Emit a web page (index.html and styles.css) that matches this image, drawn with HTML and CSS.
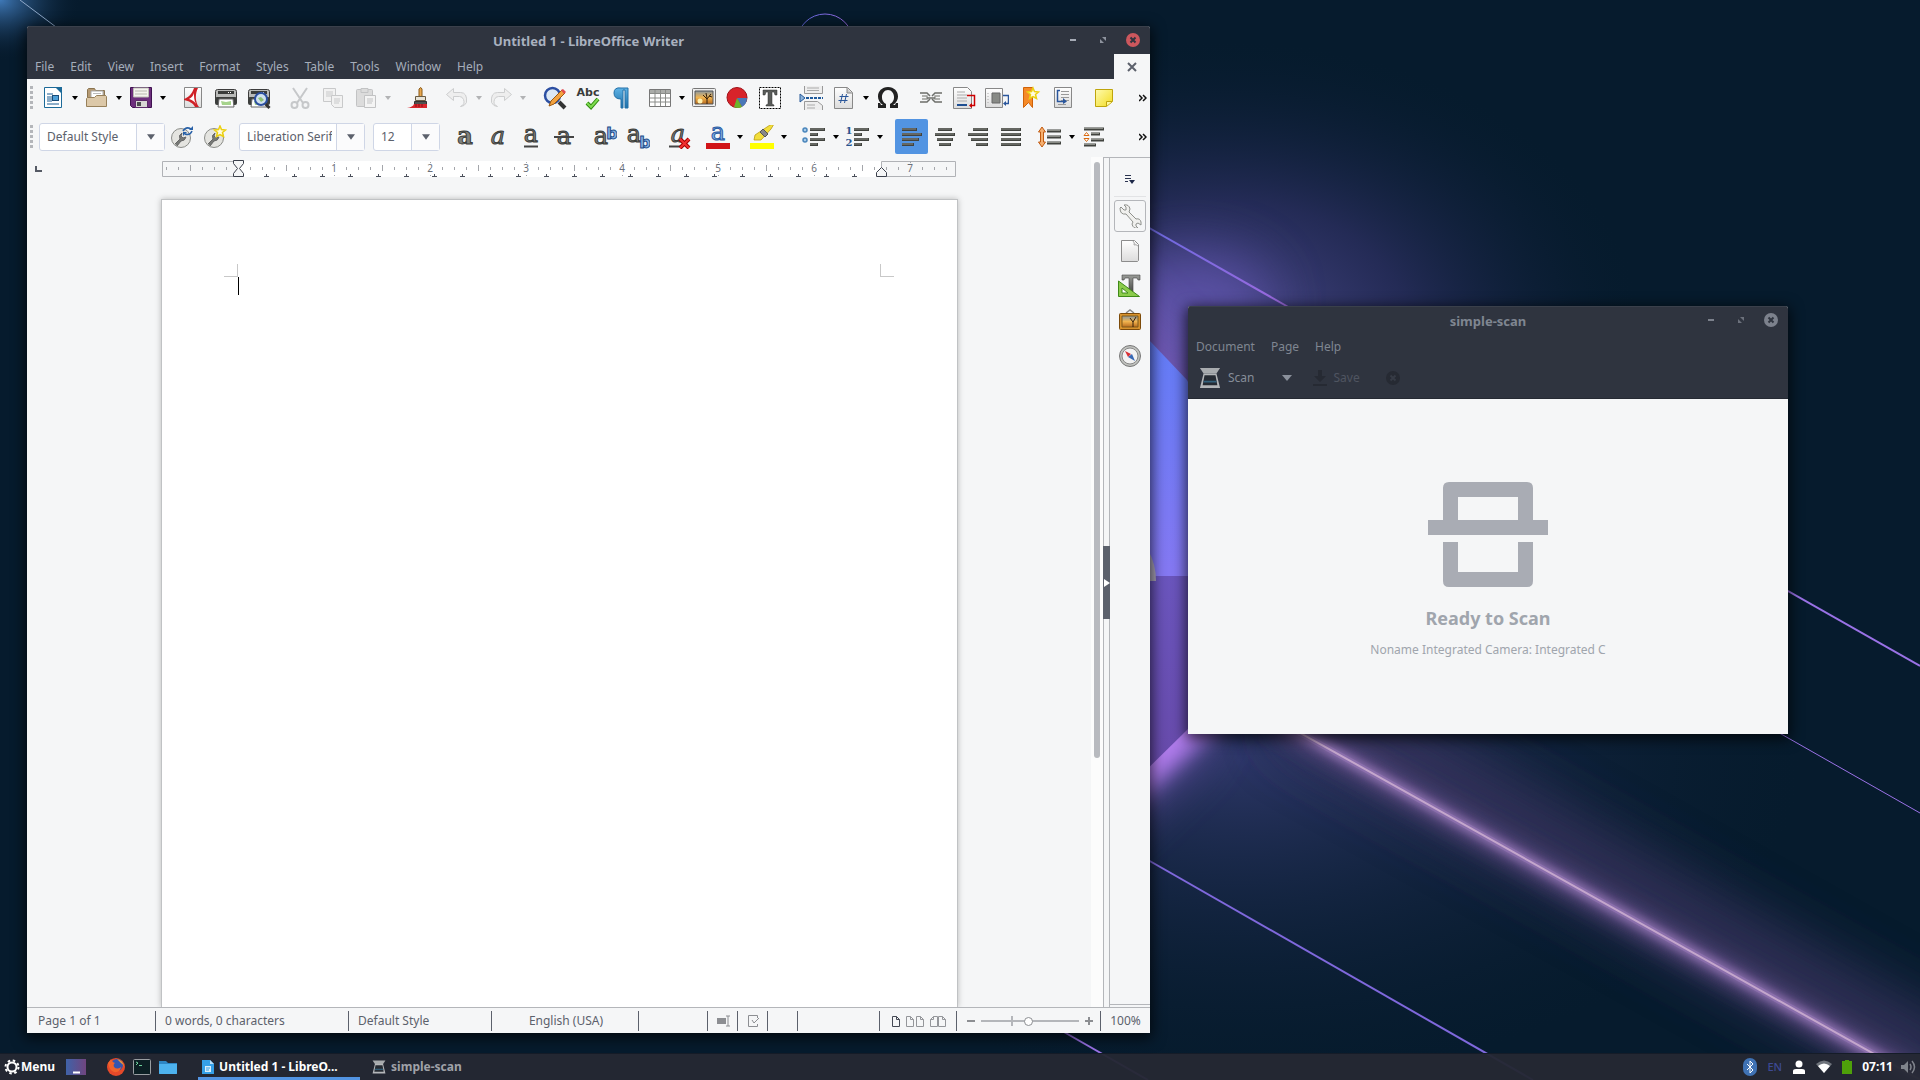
FILE: index.html
```html
<!DOCTYPE html>
<html lang="en">
<head>
<meta charset="utf-8">
<title>Desktop</title>
<link rel="stylesheet" href="styles.css">
</head>
<body>
<svg class="defs" aria-hidden="true">
  <defs>
    <linearGradient id="gDark" x1="0" y1="0" x2="0" y2="1"><stop offset="0" stop-color="#9a9c98"/><stop offset="1" stop-color="#4a4c49"/></linearGradient>
    <linearGradient id="gBlue" x1="0" y1="0" x2="0" y2="1"><stop offset="0" stop-color="#5fb3e6"/><stop offset="1" stop-color="#1b6ea8"/></linearGradient>
    <linearGradient id="gPaper" x1="0" y1="0" x2="0" y2="1"><stop offset="0" stop-color="#fff"/><stop offset="1" stop-color="#dcdcdc"/></linearGradient>
    <linearGradient id="gSky" x1="0" y1="0" x2="0" y2="1"><stop offset="0" stop-color="#8b98a0"/><stop offset=".5" stop-color="#f0b450"/><stop offset="1" stop-color="#b86a1c"/></linearGradient>
    <linearGradient id="gYel" x1="0" y1="0" x2="1" y2="1"><stop offset="0" stop-color="#fffbb0"/><stop offset="1" stop-color="#f2dc20"/></linearGradient>
  </defs>
  <symbol id="new" viewBox="0 0 24 24"><path d="M3.500 1.500h13l4 5v15h-17z" fill="#fff" stroke="#1c6a99"/><path d="M14 1h7v7z" fill="#1c6a99"/><path d="M6 8h6M6 11h5M6 13h5M6 15h5M6 18h12" stroke="#1a5c92" /><rect x="11.500" y="9.500" width="6" height="5" fill="#4ea0d8" stroke="#1a4c78"/></symbol>
  <symbol id="open" viewBox="0 0 24 24"><path d="M2.500 20V3.500l1-1h6l1 2h9v5H21" fill="#b59a74" stroke="#8a7450"/><path d="M6 5h12v8H6z" fill="#fff" stroke="#aaa"/><path d="M8 7.500h8" stroke="#bbb"/><path d="M1.500 20.500v-8l1-1h7l2-2h9l1 1v10z" fill="#dcc8a8" stroke="#97805a"/></symbol>
  <symbol id="save" viewBox="0 0 24 24"><path d="M1.500 1.500h21v20h-19l-2-2z" fill="#6d2f7d" stroke="#3f1250"/><path d="M4.500 2h15v9h-15z" fill="#f4f4ee" stroke="#bcbcb4"/><path d="M6 5h12M6 8h12" stroke="#b8b8b0"/><path d="M6.500 14.500h12v7h-12z" fill="#d8d8d4" stroke="#5c2a6a"/><path d="M8 16h4v4H8z" fill="#4c4c50"/></symbol>
  <symbol id="pdf" viewBox="0 0 24 24"><path d="M3.500 1.500h17v20h-17z" fill="url(#gPaper)" stroke="#888"/><path d="M3 13c5-2 8-5 10-11h4c-3 6-3 14 1 19h-4c-2-4-6-6-11-7" fill="#cf2026"/><path d="M8 13c3-2 4-3 5-6 0 4 0 7 2 11-2-3-4-4-7-5" fill="#fff"/></symbol>
  <symbol id="print" viewBox="0 0 24 24"><rect x="1.500" y="3.500" width="21" height="11" rx="2" fill="#b9bab8" stroke="#3c3c3c"/><path d="M4 5h16v3H4z" fill="#3a3c3a"/><path d="M14 6.500h4" stroke="#fff" stroke-dasharray="1 1"/><rect x="1" y="11" width="22" height="8" rx="2" fill="#3c3e3c"/><path d="M5 13h14l1 8H4z" fill="#fff" stroke="#666"/><path d="M7 15l5 1 5-1v4H8z" fill="#a6d38c"/></symbol>
  <symbol id="preview" viewBox="0 0 24 24"><use href="#print"/><circle cx="14" cy="13" r="6" fill="#cfe0ee" stroke="#2b4fa0" stroke-width="2"/><path d="M11 12l3-1 3 3-3 2z" fill="#8dbf72"/><path d="M18.500 18l4 4" stroke="#333" stroke-width="3"/></symbol>
  <symbol id="cut" viewBox="0 0 24 24"><g fill="none" stroke="#c6c8ca" stroke-width="2"><path d="M5 2l10 15M19 2L9 17"/><circle cx="6.500" cy="19" r="3"/><circle cx="17.500" cy="19" r="3"/></g></symbol>
  <symbol id="copy" viewBox="0 0 24 24"><g fill="#f2f2f2" stroke="#c8c9ca"><path d="M2.500 2.500h12v13h-12z"/><path d="M5 6h7M5 8h7M5 10h7"/><path d="M10.500 9.500h11v12h-8l-3-3z"/><path d="M13 13h6M13 15h6M13 17h5"/></g></symbol>
  <symbol id="paste" viewBox="0 0 24 24"><g fill="#dcdcdc" stroke="#c2c3c4"><rect x="2.500" y="3.500" width="16" height="17" rx="1"/><path d="M7 2.500h7v4H7z"/><path d="M10.500 9.500h11v12h-11z" fill="#f4f4f4"/><path d="M13 13h6M13 15h6M13 17h5"/></g></symbol>
  <symbol id="brush" viewBox="0 0 24 24"><path d="M13 11V3q2-3 3 0v8" fill="#e8a850" stroke="#8a5a18"/><path d="M9.500 10.500h10v4h-10z" fill="#e8e4d8" stroke="#6a5c44"/><path d="M8.500 15.500h12v3h-12z" fill="#505250" stroke="#333"/><path d="M8 18h13v4H1q6-1 7-4" fill="#d8262c"/><path d="M10 18v3M13 18v3M16 18v3" stroke="#8c1015"/></symbol>
  <symbol id="undo" viewBox="0 0 24 24"><path d="M1.500 8.500l7-6v4h7q7 0 6 10-2 4-6 4 5-2 3-7-1-3-4-3h-6v4z" fill="#eee" stroke="#cdcecf"/></symbol>
  <symbol id="redo" viewBox="0 0 24 24"><path d="M22.500 8.500l-7-6v4h-7q-7 0-6 10 2 4 6 4-5-2-3-7 1-3 4-3h6v4z" fill="#eee" stroke="#cdcecf"/></symbol>
  <symbol id="find" viewBox="0 0 24 24"><path d="M16 16l6 6" stroke="#333" stroke-width="4"/><circle cx="9.500" cy="9.500" r="7.500" fill="#dce8f4" stroke="#2c4fa2" stroke-width="2.500"/><path d="M6 20l2-5L19 4l3 3-11 11z" fill="#f2a240" stroke="#9c5a10"/><path d="M18 4l2-1 3 3-2 2z" fill="#e04a50"/></symbol>
  <symbol id="pil" viewBox="0 0 24 24"><path d="M12 13q-7 0-7-6t7-5h7v20h-3V4h-2v18h-2z" fill="url(#gBlue)" stroke="#2471a8"/></symbol>
  <symbol id="table" viewBox="0 0 24 24"><path d="M1.500 3.500h21v17h-21z" fill="#fff" stroke="#777"/><path d="M2 4h20v3H2z" fill="#aaaca9"/><path d="M2 7.500h20M2 12h20M2 16h20M7 4v16M12.500 4v16M17.500 4v16" stroke="#8a8c89"/></symbol>
  <symbol id="image" viewBox="0 0 24 24"><rect x=".5" y="2.500" width="23" height="18" rx="1" fill="#eee" stroke="#777"/><path d="M3 5h18v13H3z" fill="url(#gSky)" stroke="#555"/><circle cx="8" cy="15" r="2.500" fill="#fff2b0"/><path d="M15 18v-5l-4-4M15 13l4-5M15 12l-1-5M17 10l3 1" stroke="#35200c" fill="none"/></symbol>
  <symbol id="chart" viewBox="0 0 24 24"><circle cx="12" cy="11.500" r="10" fill="#d8232a" stroke="#a01218"/><path d="M12 12h10q0 6-5 9z" fill="#4a78b8"/><path d="M12 12l5 9q-4 2-8 0z" fill="#6cb52c"/></symbol>
  <symbol id="tbox" viewBox="0 0 24 24"><rect x="1.500" y="1.500" width="21" height="21" fill="#fff" stroke="#000" stroke-dasharray="2 1"/><path d="M5 4h14v5h-2l-1-3h-2v12l2 1v1H8v-1l2-1V6H8L7 9H5z" fill="#5a5c59" stroke="#333" stroke-width=".5"/></symbol>
  <symbol id="pbreak" viewBox="0 0 24 24"><path d="M5.500 0v7.500h18V0" fill="#eee" stroke="#999"/><path d="M8 2h12M8 4.500h12" stroke="#aaa"/><path d="M5.500 24v-8.500h13l5 4V24" fill="#eee" stroke="#999"/><path d="M8 19h8M8 22h8" stroke="#aaa"/><path d="M1 8l5 4-5 4z" fill="#8cb4dc" stroke="#2a5c9a"/><path d="M7 12h17" stroke="#1f5a9c" stroke-width="2" stroke-dasharray="3 1"/></symbol>
  <symbol id="field" viewBox="0 0 24 24"><path d="M2.500 1.500h13l5 5v16h-18z" fill="url(#gPaper)" stroke="#888"/><path d="M15 2v5h5" fill="#ccc" stroke="#888"/><path d="M10.500 8l-2 9M14.500 8l-2 9M7.500 10.500h9M6.500 14.500h9" stroke="#2b579a"/></symbol>
  <symbol id="omega" viewBox="0 0 24 24"><path d="M2 22h8v-4C3 14 6 4 12 4s9 10 2 14v4h8v-5h-2l-1 2h-2C26 13 22 1 12 1S-2 13 7 19H5l-1-2H2z" fill="#222"/></symbol>
  <symbol id="link" viewBox="0 0 24 24"><g fill="none" stroke="#6c6e6a" stroke-width="1.500"><path d="M1 7h7l3 3M1 16h7l3-3M23 7h-7l-3 3M23 16h-7l-3-3"/><path d="M3 10h5v3H3M21 10h-5v3h5" stroke="#999b97"/><path d="M8 12h8"/></g></symbol>
  <symbol id="foot" viewBox="0 0 24 24"><path d="M1.500 1.500h14l4 4v17h-18z" fill="url(#gPaper)" stroke="#888"/><path d="M5 6h8M5 9h10M5 12h10M5 15h10" stroke="#aaa"/><path d="M5 19h10" stroke="#1f4f92" stroke-width="2"/><path d="M15 9.500h7.500v10H18" fill="none" stroke="#c00" stroke-width="1.500"/><path d="M20 17v5l-3-2.500z" fill="#c00"/></symbol>
  <symbol id="endn" viewBox="0 0 24 24"><path d="M.5 2.500h17v19H.5z" fill="url(#gPaper)" stroke="#888"/><path d="M7 7h8v10H7z" fill="#888a86" stroke="#666"/><path d="M3 7v12" stroke="#aaa" stroke-dasharray="1 2"/><path d="M18 9.500h5.500v8H20" fill="none" stroke="#2a569c" stroke-width="1.500"/><path d="M21 15v5l-3-2.500z" fill="#2a569c"/></symbol>
  <symbol id="bmark" viewBox="0 0 24 24"><path d="M5.500 1.500h9v20l-4-5-5 5z" fill="#f58a28" stroke="#d06208"/><path d="M15 2l1.500 3.500 4 .5-3 2.500 1 4-3.500-2-3.500 2 1-4-3-2.500 4-.5z" fill="#fffbe0" stroke="#ecd010" stroke-width="1.500"/></symbol>
  <symbol id="xref" viewBox="0 0 24 24"><path d="M3.500 1.500h17v20h-17z" fill="url(#gPaper)" stroke="#888"/><path d="M10 5.500h8M10 8.500h8M10 11.500h8M10 14.500h8M7 18.500h8" stroke="#999"/><path d="M9 4.500H6.500v11H12" fill="none" stroke="#2a569c" stroke-width="1.500"/><path d="M12 12v6l4-2.500z" fill="#2a569c"/></symbol>
  <symbol id="note" viewBox="0 0 24 24"><path d="M3.500 3.500h17v12l-6 5h-11z" fill="url(#gYel)" stroke="#bfa50c"/><path d="M20 15.500h-5.500V20" fill="#fff9a0" stroke="#bfa50c"/></symbol>
  <symbol id="wrenchc" viewBox="0 0 24 24"><circle cx="11" cy="13" r="9.500" fill="#e4e4e0" stroke="#8a8c88"/><path d="M5 19l5-5q-2-4 2-6l-1 3 2 2 3-1q-1 4-5 4l-4 5" fill="#777976" stroke="#666"/></symbol>
  <symbol id="updst" viewBox="0 0 24 24"><use href="#wrenchc"/><path d="M13 6q3-5 8-2M22 6q-2 5-7 3" fill="none" stroke="#2a62a8" stroke-width="1.500"/><path d="M23 1v4h-4zM13 11V7h4z" fill="#2a62a8"/></symbol>
  <symbol id="newst" viewBox="0 0 24 24"><use href="#wrenchc"/><path d="M17 1l1.500 3.500 4 .5-3 2.500 1 4-3.500-2-3.500 2 1-4-3-2.500 4-.5z" fill="#fffbe0" stroke="#ecd010" stroke-width="1.500"/></symbol>
  <symbol id="bars" viewBox="0 0 24 24"><path d="M2 4.500h15M2 9.500h20M2 14.500h17M2 19.500h12" stroke="#41433f" stroke-width="3"/><path d="M2 4h14M2 9h19M2 14h16M2 19h11" stroke="#8a8c86"/></symbol>
  <symbol id="alc" viewBox="0 0 24 24"><path d="M5 4.500h14M2 9.500h20M4 14.500h16M6 19.500h12" stroke="#41433f" stroke-width="3"/><path d="M5 4h13M2 9h19M4 14h15M6 19h11" stroke="#8a8c86"/></symbol>
  <symbol id="alr" viewBox="0 0 24 24"><path d="M7 4.500h15M2 9.500h20M5 14.500h17M10 19.500h12" stroke="#41433f" stroke-width="3"/><path d="M7 4h14M2 9h19M5 14h16M10 19h11" stroke="#8a8c86"/></symbol>
  <symbol id="alj" viewBox="0 0 24 24"><path d="M2 4.500h20M2 9.500h20M2 14.500h20M2 19.500h20" stroke="#41433f" stroke-width="3"/><path d="M2 4h19M2 9h19M2 14h19M2 19h19" stroke="#8a8c86"/></symbol>
  <symbol id="rows" viewBox="0 0 24 24"><path d="M8 4.500h15M8 9.500h8M8 14.500h15M8 19.500h8" stroke="#41433f" stroke-width="3"/><path d="M8 4h14M8 9h7M8 14h14M8 19h7" stroke="#8a8c86"/></symbol>
  <symbol id="bul" viewBox="0 0 24 24"><use href="#rows"/><g fill="#a8cbe8" stroke="#4a86bc" stroke-width="1.500"><circle cx="3" cy="5" r="2"/><circle cx="3" cy="15" r="2"/></g></symbol>
  <symbol id="lsp" viewBox="0 0 24 24"><path d="M9 6h14M9 12h14M9 18h14" stroke="#41433f" stroke-width="3"/><path d="M9 5.500h13M9 11.500h13M9 17.500h13" stroke="#8a8c86"/><path d="M4 2l3.500 5h-2v10h2L4 22 .5 17h2V7h-2z" fill="#f6b070" stroke="#c05a10"/></symbol>
  <symbol id="psp" viewBox="0 0 24 24"><path d="M2 4h20M9 9h9M9 15h13M2 20h12" stroke="#41433f" stroke-width="3"/><path d="M2 3.500h19M9 8.500h8M9 14.500h12M2 19.500h11" stroke="#8a8c86"/><path d="M4.500 7.500l2.500 3H2zM4.500 16.500l2.500-3H2z" fill="#fff" stroke="#d86a10"/></symbol>
  <symbol id="tt" viewBox="0 0 24 24"><path d="M4 1h18v5h-2l-1-2h-4v14h-4V4H7L6 6H4z" fill="url(#gDark)" stroke="#444" stroke-width=".6"/><path d="M.5 7v15.500h21z" fill="#8ccc4c" stroke="#3f8a18"/><path d="M4 14v5h6z" fill="#fff" stroke="#3f8a18"/></symbol>
  <symbol id="wrench" viewBox="0 0 24 24"><path d="M2 4l1-1 3 3h2V3L6 1q5-1 6 4l-1 3 7 7q4-1 5 3v3l-3-2-2 1v2l2 2q-5 1-6-4l1-2-7-8Q2 11 2 4z" fill="#f0f0ee" stroke="#8e908c"/></symbol>
  <symbol id="sheet" viewBox="0 0 24 24"><path d="M3.500 1.500h13l4 4v16l-1 1h-16z" fill="url(#gPaper)" stroke="#8c8c8c"/><path d="M15 2q2 2 1 4 2-1 4 1" fill="#ddd" stroke="#aaa"/></symbol>
  <symbol id="gallery" viewBox="0 0 24 24"><path d="M8 4l4-3 4 3" fill="none" stroke="#888" stroke-width="1.500"/><rect x="1.500" y="4.500" width="21" height="16" rx="1" fill="#d8922c" stroke="#7c4a0a"/><path d="M4 7h16v11H4z" fill="url(#gSky)" stroke="#7c5a1c"/><path d="M15 18v-5l-3-4M15 13l3-5" stroke="#35200c" fill="none"/></symbol>
  <symbol id="compass" viewBox="0 0 24 24"><circle cx="12" cy="12" r="10.500" fill="#c0c2be" stroke="#777"/><circle cx="12" cy="12" r="8" fill="#f2f2f2" stroke="#888"/><path d="M7 7l6 3-3 3z" fill="#d83034"/><path d="M17 17l-3-7-4 3z" fill="#3868b4"/></symbol>
  <symbol id="scanner" viewBox="0 0 22 24"><path d="M0 1h22l-4 6H4z" fill="#a8abae"/><path d="M4 7h14l4 16H0z" fill="#b4b6b9"/><path d="M5 9h12l2 11H3z" fill="#262b33"/><path d="M4 15h14v2H4z" fill="#33617c"/></symbol>
  <symbol id="caret" viewBox="0 0 8 6"><path d="M1 1h6L4 5z" fill="currentColor"/></symbol>
</svg>

<svg class="wallpaper" viewBox="0 0 1920 1080" preserveAspectRatio="xMidYMid slice" aria-hidden="true">
  <defs>
    <radialGradient id="w1"><stop offset="0" stop-color="#4c4a8c"/><stop offset=".45" stop-color="#2b2f60" stop-opacity=".8"/><stop offset="1" stop-color="#0a1c30" stop-opacity="0"/></radialGradient>
    <radialGradient id="w2"><stop offset="0" stop-color="#2c3666"/><stop offset="1" stop-color="#0c1e33" stop-opacity="0"/></radialGradient>
    <radialGradient id="w3"><stop offset="0" stop-color="#3f79b8"/><stop offset="1" stop-color="#0a1e32" stop-opacity="0"/></radialGradient>
    <linearGradient id="w4" x1="0" y1="0" x2="0" y2="1"><stop offset="0" stop-color="#5f7cf6"/><stop offset="1" stop-color="#8578f2"/></linearGradient>
    <linearGradient id="w5" x1="0" y1="0" x2="0" y2="1"><stop offset="0" stop-color="#6a55bd"/><stop offset="1" stop-color="#6749a8"/></linearGradient>
    <linearGradient id="w6" x1="0" y1="0" x2="1" y2="0"><stop offset="0" stop-color="#5a68e0"/><stop offset="1" stop-color="#a06be0"/></linearGradient>
    <filter id="b5" x="-50%" y="-50%" width="200%" height="200%"><feGaussianBlur stdDeviation="5"/></filter>
    <filter id="b8" x="-50%" y="-50%" width="200%" height="200%"><feGaussianBlur stdDeviation="10"/></filter>
    <filter id="b20" x="-50%" y="-50%" width="200%" height="200%"><feGaussianBlur stdDeviation="28"/></filter>
  </defs>
  <rect width="1920" height="1080" fill="#061b2d"/>
  <ellipse cx="1220" cy="330" rx="420" ry="290" fill="url(#w1)"/>
  <ellipse cx="1240" cy="760" rx="560" ry="320" fill="url(#w2)"/>
  <ellipse cx="0" cy="0" rx="80" ry="60" fill="url(#w3)"/>
  <path d="M20 0l40 30" stroke="#8fa8c8"/>
  <ellipse cx="1190" cy="300" rx="80" ry="50" fill="#6c5cc0" opacity=".6" filter="url(#b20)"/>
  <path d="M1290 700L1960 1075" stroke="#3a3560" stroke-width="80" opacity=".8" filter="url(#b20)"/>
  <path d="M1270 716L1960 1102" stroke="#5e4c84" stroke-width="22" filter="url(#b8)"/>
  <path d="M1270 716L1960 1102" stroke="#a886c8" stroke-width="9" filter="url(#b5)" opacity=".8"/>
  <path d="M1270 716L1960 1102" stroke="#8f72b0" stroke-width="6" opacity=".8"/>
  <path d="M1270 716L1960 1102" stroke="#c4a6cc" stroke-width="2"/>
  <path d="M1050 230L1200 380V740L1050 880z" fill="#a070e8" filter="url(#b20)" opacity=".7"/>
  <path d="M1100 800L1215 695" stroke="#b07cec" stroke-width="50" filter="url(#b8)"/>
  <path d="M1130 320l57 60 30 60v136h-90z" fill="url(#w4)"/>
  <path d="M1130 576h90v110l-33 44-57 56z" fill="url(#w5)"/>
  <path d="M1148 550q8 14 8 31h-8z" fill="#aaa3b8"/>
  <g fill="none" stroke="url(#w6)">
    <circle cx="825" cy="42" r="28"/>
    <path d="M1100 200L1290 308" stroke-width="2"/>
  </g>
  <g fill="none" stroke="#9a72e6" stroke-width="2">
    <path d="M1700 541L1920 666"/>
    <path d="M1760 722L1920 813" stroke-width="1"/>
    <path d="M1120 844L1533 1080" stroke="#7f68dc"/>
    <path d="M1050 1024L1148 1080"/>
  </g>
</svg>

<main class="desktop">
  <section class="window writer">
    <header class="titlebar">
      <h1>Untitled 1 - LibreOffice Writer</h1>
      <div class="controls">
        <button aria-label="Minimize"><svg width="16" height="16"><path d="M5 7h6v2H5z" fill="#a6abb6"/></svg></button>
        <button aria-label="Maximize"><svg width="16" height="16"><path d="M7 5h4v4zM5 7v4h4z" fill="#8e939e"/></svg></button>
        <button aria-label="Close"><svg width="16" height="16"><circle cx="8" cy="8" r="7" fill="#cc575d"/><path d="M5.500 5.500l5 5M10.500 5.500l-5 5" stroke="#2f343f" stroke-width="2"/></svg></button>
      </div>
    </header>
    <nav class="menubar">
      <button>File</button><button>Edit</button><button>View</button><button>Insert</button><button>Format</button><button>Styles</button><button>Table</button><button>Tools</button><button>Window</button><button>Help</button>
      <button class="doc-close" aria-label="Close document"><svg width="10" height="10"><path d="M1 1l8 8M9 1L1 9" stroke="#5c616c" stroke-width="2"/></svg></button>
    </nav>

    <div class="toolbar">
      <span class="grip"></span>
      <div class="group">
        <button class="tool" aria-label="New"><svg><use href="#new"/></svg></button><button class="drop" aria-label="New options"><svg><use href="#caret"/></svg></button>
        <button class="tool" aria-label="Open"><svg><use href="#open"/></svg></button><button class="drop" aria-label="Recent files"><svg><use href="#caret"/></svg></button>
        <button class="tool" aria-label="Save"><svg><use href="#save"/></svg></button><button class="drop" aria-label="Save options"><svg><use href="#caret"/></svg></button>
      </div>
      <div class="group g8">
        <button class="tool" aria-label="Export as PDF"><svg><use href="#pdf"/></svg></button>
        <button class="tool" aria-label="Print"><svg><use href="#print"/></svg></button>
        <button class="tool" aria-label="Print preview"><svg><use href="#preview"/></svg></button>
      </div>
      <div class="group g8">
        <button class="tool" aria-label="Cut" disabled><svg><use href="#cut"/></svg></button>
        <button class="tool" aria-label="Copy" disabled><svg><use href="#copy"/></svg></button>
        <button class="tool" aria-label="Paste" disabled><svg><use href="#paste"/></svg></button><button class="drop" aria-label="Paste options" disabled><svg><use href="#caret"/></svg></button>
      </div>
      <div class="group g8">
        <button class="tool" aria-label="Clone formatting"><svg><use href="#brush"/></svg></button>
      </div>
      <div class="group g6">
        <button class="tool" aria-label="Undo" disabled><svg><use href="#undo"/></svg></button><button class="drop" aria-label="Undo list" disabled><svg><use href="#caret"/></svg></button>
        <button class="tool" aria-label="Redo" disabled><svg><use href="#redo"/></svg></button><button class="drop" aria-label="Redo list" disabled><svg><use href="#caret"/></svg></button>
      </div>
      <div class="group g10">
        <button class="tool" aria-label="Find and replace"><svg><use href="#find"/></svg></button>
        <button class="tool" aria-label="Spelling"><svg viewBox="0 0 24 24"><text x="12" y="10" class="ic-abc">Abc</text><path d="M11 17l4 4 7-8" fill="none" stroke="#2f8a10" stroke-width="4"/><path d="M11 17l4 4 7-8" fill="none" stroke="#7fdc50" stroke-width="2"/></svg></button>
        <button class="tool" aria-label="Formatting marks"><svg><use href="#pil"/></svg></button>
      </div>
      <div class="group g6">
        <button class="tool" aria-label="Insert table"><svg><use href="#table"/></svg></button><button class="drop" aria-label="Table size"><svg><use href="#caret"/></svg></button>
        <button class="tool" aria-label="Insert image"><svg><use href="#image"/></svg></button>
        <button class="tool" aria-label="Insert chart"><svg><use href="#chart"/></svg></button>
        <button class="tool" aria-label="Insert text box"><svg><use href="#tbox"/></svg></button>
      </div>
      <div class="group g8">
        <button class="tool" aria-label="Page break"><svg><use href="#pbreak"/></svg></button>
        <button class="tool" aria-label="Insert field"><svg><use href="#field"/></svg></button><button class="drop" aria-label="Field list"><svg><use href="#caret"/></svg></button>
        <button class="tool" aria-label="Special character"><svg><use href="#omega"/></svg></button>
      </div>
      <div class="group g10">
        <button class="tool" aria-label="Hyperlink"><svg><use href="#link"/></svg></button>
        <button class="tool" aria-label="Footnote"><svg><use href="#foot"/></svg></button>
        <button class="tool" aria-label="Endnote"><svg><use href="#endn"/></svg></button>
        <button class="tool" aria-label="Bookmark"><svg><use href="#bmark"/></svg></button>
        <button class="tool" aria-label="Cross-reference"><svg><use href="#xref"/></svg></button>
      </div>
      <div class="group g8">
        <button class="tool" aria-label="Comment"><svg><use href="#note"/></svg></button>
      </div>
      <button class="more" aria-label="More tools"><svg width="8" height="8"><path d="M0 1l3 3-3 3M4 1l3 3-3 3" fill="none" stroke="#111" stroke-width="1.500"/></svg></button>
    </div>

    <div class="toolbar">
      <span class="grip"></span>
      <div class="combo first"><input aria-label="Paragraph style" value="Default Style"><button aria-label="Style list"><svg><use href="#caret"/></svg></button></div>
      <div class="group">
        <button class="tool" aria-label="Update style"><svg><use href="#updst"/></svg></button>
        <button class="tool" aria-label="New style"><svg><use href="#newst"/></svg></button>
      </div>
      <div class="combo g8"><input aria-label="Font name" value="Liberation Serif"><button aria-label="Font list"><svg><use href="#caret"/></svg></button></div>
      <div class="combo size g8"><input aria-label="Font size" value="12"><button aria-label="Size list"><svg><use href="#caret"/></svg></button></div>
      <div class="group g8">
        <button class="tool" aria-label="Bold"><svg viewBox="0 0 24 24"><text x="12" y="19" class="ic-a ic-heavy">a</text></svg></button>
        <button class="tool" aria-label="Italic"><svg viewBox="0 0 24 24"><text x="12" y="19" class="ic-a ic-slant">a</text></svg></button>
        <button class="tool" aria-label="Underline"><svg viewBox="0 0 24 24"><text x="12" y="17" class="ic-a">a</text><path d="M5 21.500h14" stroke="#444" stroke-width="2"/></svg></button>
        <button class="tool" aria-label="Strikethrough"><svg viewBox="0 0 24 24"><text x="12" y="19" class="ic-a">a</text><path d="M2 12h20" stroke="#444" stroke-width="2"/></svg></button>
      </div>
      <div class="group g8">
        <button class="tool" aria-label="Superscript"><svg viewBox="0 0 24 24"><text x="8" y="19" class="ic-a">a</text><text x="19" y="14" class="ic-b">b</text></svg></button>
        <button class="tool" aria-label="Subscript"><svg viewBox="0 0 24 24"><text x="8" y="17" class="ic-a">a</text><text x="19" y="23" class="ic-b">b</text></svg></button>
      </div>
      <div class="group g8">
        <button class="tool" aria-label="Clear formatting"><svg viewBox="0 0 24 24"><text x="11" y="17" class="ic-a ic-slant">a</text><path d="M2 21.500h12" stroke="#444" stroke-width="2"/><path d="M13 14l9 9M22 14l-9 9" stroke="#a40000" stroke-width="4"/><path d="M13 14l9 9M22 14l-9 9" stroke="#f03030" stroke-width="2"/></svg></button>
      </div>
      <div class="group g6">
        <button class="tool" aria-label="Font color"><svg viewBox="0 0 24 24"><text x="12" y="15" class="ic-a ic-blue">a</text><path d="M0 18h24v6H0z" fill="#d11418"/></svg></button><button class="drop" aria-label="Font colors"><svg><use href="#caret"/></svg></button>
        <button class="tool" aria-label="Highlighting"><svg viewBox="0 0 24 24"><path d="M4 15l1-5L14 4l6-4 4-1-3 5-10 11z" fill="#f2de3c" stroke="#b89c10" stroke-width=".8"/><path d="M10 7l5 5 3-3-5-5z" fill="#888" stroke="#555"/><path d="M0 18h24v6H0z" fill="#ff0"/></svg></button><button class="drop" aria-label="Highlight colors"><svg><use href="#caret"/></svg></button>
      </div>
      <div class="group g8">
        <button class="tool" aria-label="Bullets"><svg><use href="#bul"/></svg></button><button class="drop" aria-label="Bullet list"><svg><use href="#caret"/></svg></button>
        <button class="tool" aria-label="Numbering"><svg viewBox="0 0 24 24"><use href="#rows"/><text x="3" y="9" class="ic-n">1</text><text x="3" y="21" class="ic-n">2</text></svg></button><button class="drop" aria-label="Numbering list"><svg><use href="#caret"/></svg></button>
      </div>
      <div class="group g10">
        <button class="tool active" aria-label="Align left" aria-pressed="true"><svg><use href="#bars"/></svg></button>
        <button class="tool" aria-label="Center"><svg><use href="#alc"/></svg></button>
        <button class="tool" aria-label="Align right"><svg><use href="#alr"/></svg></button>
        <button class="tool" aria-label="Justify"><svg><use href="#alj"/></svg></button>
      </div>
      <div class="group g6">
        <button class="tool" aria-label="Line spacing"><svg><use href="#lsp"/></svg></button><button class="drop" aria-label="Spacing list"><svg><use href="#caret"/></svg></button>
        <button class="tool" aria-label="Paragraph spacing"><svg><use href="#psp"/></svg></button>
      </div>
      <button class="more" aria-label="More formatting"><svg width="8" height="8"><path d="M0 1l3 3-3 3M4 1l3 3-3 3" fill="none" stroke="#111" stroke-width="1.500"/></svg></button>
    </div>

    <div class="workspace">
      <div class="editor">
        <div class="ruler-row">
          <button class="tab-kind" aria-label="Tab type"><svg width="8" height="8"><path d="M1 1v5h6" fill="none" stroke="#555a65" stroke-width="2"/></svg></button>
          <svg class="ruler" width="794" height="19" viewBox="0 0 794 19">
            <defs>
              <pattern id="ticks" x="76" y="0" width="96" height="19" patternUnits="userSpaceOnUse">
                <path d="M12.500 8v3M24.500 8v3M36.500 8v3M60.500 8v3M72.500 8v3M84.500 8v3M48.500 6v6M.5 3v1M.5 16v1" stroke="#a4a6ab"/>
              </pattern>
              <pattern id="tabs" x="62" y="0" width="28" height="19" patternUnits="userSpaceOnUse">
                <path d="M12 17.500h5M14.500 15v3" stroke="#4b505b"/>
              </pattern>
            </defs>
            <path d="M77 2h643v16H77z" fill="#fff"/>
            <path d="M.5 2.500H77v15H.5zM719.500 2.500h74v15h-74z" fill="#f5f6f7" stroke="#b0b2b6"/>
            <path d="M4 0h784v19H4z" fill="url(#ticks)"/>
            <path d="M92 0h616v19H92z" fill="url(#tabs)"/>
            <g class="ruler-num"><text x="172" y="13">1</text><text x="268" y="13">2</text><text x="364" y="13">3</text><text x="460" y="13">4</text><text x="556" y="13">5</text><text x="652" y="13">6</text><text x="748" y="13">7</text></g>
            <path d="M71.500 1.500h10v3l-4 5 4 5v3h-10v-3l4-5-4-5zM714.500 17.500h10v-4l-5-5-5 5z" fill="#f5f6f7" stroke="#3c414c"/>
          </svg>
        </div>
        <article class="page">
          <span class="corner left"></span><span class="corner right"></span>
          <span class="caret"></span>
        </article>
      </div>
      <div class="scrollbar"><span></span></div>
      <div class="splitter"><button aria-label="Hide sidebar"><svg width="6" height="8"><path d="M0 0l6 4-6 4z" fill="#fff"/></svg></button></div>
      <aside class="sidebar">
        <button class="deck menu" aria-label="Sidebar settings"><svg width="10" height="10"><path d="M0 1.500h6M0 4.500h6M0 7.500h3" stroke="#2b3450"/><path d="M4 6h6L7 10z" fill="#1c2748"/></svg></button>
        <button class="deck on" aria-label="Properties"><svg><use href="#wrench"/></svg></button>
        <button class="deck" aria-label="Page"><svg><use href="#sheet"/></svg></button>
        <button class="deck" aria-label="Styles"><svg><use href="#tt"/></svg></button>
        <button class="deck" aria-label="Gallery"><svg><use href="#gallery"/></svg></button>
        <button class="deck" aria-label="Navigator"><svg><use href="#compass"/></svg></button>
      </aside>
    </div>

    <footer class="status">
      <span class="s-page">Page 1 of 1</span>
      <span class="s-words">0 words, 0 characters</span>
      <span class="s-style">Default Style</span>
      <span class="s-lang">English (USA)</span>
      <span class="s-blank"></span>
      <span class="s-icon"><svg width="14" height="12"><path d="M0 3h9v6H0z" fill="#8c8e92"/><path d="M9 1h4M9 11h4M11 1v10" stroke="#8c8e92"/></svg></span>
      <span class="s-icon"><svg width="12" height="14"><path d="M9.500 4V1.500h-9v11h9V10" fill="none" stroke="#8c8e92"/><path d="M4 6l2 3 5-5" fill="none" stroke="#8c8e92"/></svg></span>
      <span class="s-icon"></span>
      <span class="s-sign"></span>
      <span class="s-view">
        <button aria-label="Single page"><svg width="8" height="11"><path d="M.5.5h4l3 3v7h-7zM4.500.5v3h3" fill="none" stroke="#444954"/></svg></button>
        <button aria-label="Multiple pages"><svg width="18" height="11"><path d="M.5.5h4l3 3v7h-7zM4.500.5v3h3M10.500.5h4l3 3v7h-7zM14.500.5v3h3" fill="none" stroke="#94969a"/></svg></button>
        <button aria-label="Book view"><svg width="16" height="11"><path d="M3.500.5h4v10h-7v-7zM3.500.5v3h-3M8.500.5h4l3 3v7h-7zM12.500.5v3h3" fill="none" stroke="#94969a"/></svg></button>
      </span>
      <span class="s-zoom">
        <button aria-label="Zoom out"><svg width="8" height="8"><path d="M0 4h8" stroke="#8c8e92" stroke-width="2"/></svg></button>
        <input type="range" aria-label="Zoom" min="0" max="100" value="49">
        <button aria-label="Zoom in"><svg width="8" height="8"><path d="M0 4h8M4 0v8" stroke="#8c8e92" stroke-width="2"/></svg></button>
      </span>
      <span class="s-pct">100%</span>
    </footer>
  </section>

  <section class="window scan">
    <header class="titlebar">
      <h1>simple-scan</h1>
      <div class="controls">
        <button aria-label="Minimize"><svg width="16" height="16"><path d="M5 7h6v2H5z" fill="#7c818c"/></svg></button>
        <button aria-label="Maximize"><svg width="16" height="16"><path d="M7 5h4v4zM5 7v4h4z" fill="#6c717c"/></svg></button>
        <button aria-label="Close"><svg width="16" height="16"><circle cx="8" cy="8" r="7" fill="#7c818c"/><path d="M5.500 5.500l5 5M10.500 5.500l-5 5" stroke="#2f343f" stroke-width="2"/></svg></button>
      </div>
    </header>
    <nav class="menubar"><button>Document</button><button>Page</button><button>Help</button></nav>
    <div class="scanbar">
      <button class="do-scan"><svg width="22" height="22"><use href="#scanner"/></svg>Scan</button>
      <button class="scan-opts" aria-label="Scan options"><svg width="10" height="6"><path d="M0 0h10L5 6z" fill="#8a909b"/></svg></button>
      <button class="do-save" disabled><svg width="14" height="16"><path d="M5 0h4v6h4l-6 6-6-6h4zM0 14h14v2H0z" fill="#262a33"/></svg>Save</button>
      <button class="do-stop" aria-label="Stop" disabled><svg width="14" height="14"><circle cx="7" cy="7" r="7" fill="#262a33"/><path d="M4.500 4.500l5 5M9.500 4.500l-5 5" stroke="#363b46" stroke-width="2"/></svg></button>
    </div>
    <div class="ready">
      <svg width="120" height="106"><path d="M15 38V6q0-6 6-6h78q6 0 6 6v32h15v15H0V38zM30 38h60V15H30zM15 60h15v30h60V60h15v39q0 6-6 6H21q-6 0-6-6z" fill="#a9acb4" fill-rule="evenodd"/></svg>
      <h2>Ready to Scan</h2>
      <p>Noname Integrated Camera: Integrated C</p>
    </div>
  </section>
</main>

<footer class="panel">
  <button class="start"><svg width="16" height="16"><circle cx="8" cy="8" r="4.500" fill="none" stroke="#fff" stroke-width="2"/><circle cx="8" cy="8" r="6.500" fill="none" stroke="#fff" stroke-width="2" stroke-dasharray="2.500 2.600"/></svg>Menu</button>
  <button class="desk" aria-label="Show desktop"><svg width="20" height="17"><defs><linearGradient id="pg"><stop offset="0" stop-color="#3f62a8"/><stop offset="1" stop-color="#70457f"/></linearGradient></defs><path d="M0 0h20v16H0z" fill="url(#pg)"/><path d="M7 13.500h7" stroke="#fff" stroke-width="2"/></svg></button>
  <button class="launch ff" aria-label="Firefox"><svg width="18" height="18"><circle cx="9" cy="9" r="9" fill="#e5492a"/><circle cx="10" cy="7" r="6" fill="#3556b0"/><path d="M1 5q2-2 3-4 1 3 4 4-2 1-1 4 3 3 7 0-1 6-7 5-5-2-6-9z" fill="#f0632c"/><path d="M10 1q6 1 7 8-1-3-3-4" fill="#f59a30"/></svg></button>
  <button class="launch" aria-label="Terminal"><svg width="18" height="18"><rect x=".5" y="1.500" width="17" height="15" rx="1" fill="#0c1f24" stroke="#9a9ea2"/><path d="M3 4l2 1-2 2M6 7.500h3" stroke="#8fb" stroke-width=".8" fill="none"/></svg></button>
  <button class="launch" aria-label="Files"><svg width="18" height="18"><path d="M0 3h7l2 2h9v11H0z" fill="#2e86c4"/><path d="M0 6h18v9q0 1-1 1H1q-1 0-1-1z" fill="#4db2ee"/></svg></button>
  <button class="task current"><svg width="12" height="16"><path d="M0 1h8l4 4v10H0z" fill="#35a0e8"/><path d="M8 1v4h4z" fill="#b8e0fa"/><path d="M3 7h6v6H3z" fill="#d8eefb"/><path d="M4 9h4M4 11h3" stroke="#35a0e8"/></svg>Untitled 1 - LibreO...</button>
  <button class="task"><svg width="14" height="14"><use href="#scanner"/></svg>simple-scan</button>
  <div class="tray">
    <svg width="14" height="18"><rect width="14" height="18" rx="7" fill="#3f72b4"/><path d="M4 6l6 6-3 3V3l3 3-6 6" fill="none" stroke="#fff"/></svg>
    <span class="lang">EN</span>
    <svg width="14" height="14"><circle cx="7" cy="4" r="3.500" fill="#fff"/><path d="M1 14v-3q0-2 3-2h6q3 0 3 2v3z" fill="#fff"/></svg>
    <svg width="16" height="14"><path d="M0 4q8-7 16 0l-8 9z" fill="#6f747c"/><path d="M2 6q6-5 12 0l-6 7z" fill="#fff"/></svg>
    <svg width="10" height="14"><path d="M3 0h4v1h3v13H0V1h3z" fill="#4ea00a"/></svg>
    <time>07:11</time>
    <svg width="15" height="14"><path d="M0 5h3l4-4v12L3 9H0z" fill="#80848c"/><path d="M9 4q2 3 0 6M11 1q5 6 0 12" fill="none" stroke="#80848c" stroke-width="1.500"/></svg>
  </div>
</footer>
</body>
</html>
```
FILE: styles.css
```css
* { box-sizing: border-box; }

body {
  margin: 0;
  min-height: 100vh;
  display: flex;
  flex-direction: column;
  overflow: hidden;
  background: #061a2b;
  font: 12px/16px "Noto Sans", sans-serif;
  color: #5c616c;
}

button {
  margin: 0;
  padding: 0;
  border: 0;
  background: none;
  font: inherit;
  color: inherit;
  display: flex;
  align-items: center;
  justify-content: center;
}

h1, h2, p { margin: 0; }

.defs { position: absolute; width: 0; height: 0; }

.wallpaper {
  position: absolute;
  inset: 0;
  width: 100%;
  height: 100%;
  z-index: -1;
}

.desktop { position: relative; flex: 1; }

/* Windows */
.window {
  position: absolute;
  display: flex;
  flex-direction: column;
  background: #f5f6f7;
  border-radius: 3px 3px 0 0;
  box-shadow: 0 3px 14px 2px rgba(0, 0, 0, .7);
  overflow: hidden;
}
.writer { inset: 26px 770px 20px 27px; }
.scan { inset: 306px 132px 319px 1188px; }

.titlebar {
  display: grid;
  grid-template-columns: 1fr auto 1fr;
  align-items: center;
  height: 28px;
  background: #2f343f;
  box-shadow: inset 0 1px #3a404b;
}
.titlebar h1 {
  grid-column: 2;
  padding-top: 1px;
  font-size: 13px;
  line-height: 18px;
  font-weight: 700;
  color: #a9b1bf;
}
.controls {
  display: flex;
  justify-content: flex-end;
  gap: 14px;
  padding-right: 9px;
}

.menubar {
  display: flex;
  height: 25px;
  background: #2f343f;
  color: #a5adba;
  gap: 16px;
  padding-left: 8px;
}
.menubar .doc-close {
  width: 36px;
  margin-left: auto;
  background: #f5f6f7;
}

/* Toolbars */
.toolbar {
  display: flex;
  align-items: center;
  height: 39px;
  padding: 0 4px 2px 3px;
}
.grip {
  width: 3px;
  height: 23px;
  margin-right: 3px;
  background: repeating-linear-gradient(#b4b6ba 0 3px, transparent 3px 5px);
}
.group { display: flex; }
.g6 { margin-left: 6px; }
.g8 { margin-left: 8px; }
.g10 { margin-left: 10px; }

.tool { width: 33px; height: 35px; }
.tool svg { width: 24px; height: 24px; }
.tool.active { background: #5294e2; border-radius: 2px; }
.drop { width: 11px; height: 35px; color: #000; }
.drop:disabled { color: #b2b3b5; }
.drop svg { width: 8px; height: 6px; }
.more { width: 10px; height: 20px; margin-left: auto; margin-right: -2px; }

.combo {
  display: flex;
  width: 126px;
  height: 28px;
  border: 1px solid #cfd6e6;
  border-radius: 3px;
  background: #fff;
}
.combo.first { margin-left: 3px; }
.combo input {
  flex: 1;
  min-width: 0;
  border: 0;
  padding: 0 4px 0 7px;
  background: none;
  font: inherit;
  color: #5c616c;
}
.combo button {
  width: 28px;
  border-left: 1px solid #cfd6e6;
  background: #fbfbfc;
}
.combo button svg { width: 12px; height: 8px; }
.combo.size { width: 67px; }

.ic-a {
  font: 24px "DejaVu Serif", serif;
  text-anchor: middle;
  fill: #80827e;
  stroke: #3a3c39;
  stroke-width: 1px;
}
.ic-heavy { font-weight: 700; }
.ic-slant { font-style: italic; }
.ic-blue { fill: #8ab4e4; stroke: #2a5ca4; }
.ic-b {
  font: bold 16px "DejaVu Sans", sans-serif;
  text-anchor: middle;
  fill: #8ab4e4;
  stroke: #204a87;
}
.ic-abc {
  font: bold 11px "DejaVu Sans", sans-serif;
  text-anchor: middle;
  fill: #3a3c3a;
}
.ic-n {
  font: bold 10px "DejaVu Serif", serif;
  text-anchor: middle;
  fill: #2a5590;
}

/* Document area */
.workspace { display: flex; flex: 1; min-height: 0; }
.editor {
  flex: 1;
  display: flex;
  flex-direction: column;
  min-width: 0;
  overflow: hidden;
}
.ruler-row {
  display: grid;
  grid-template-columns: 1fr auto 1fr;
  align-items: center;
  padding-top: 2px;
  margin-bottom: 21px;
}
.tab-kind { width: 8px; margin-left: 8px; }
.ruler { display: block; }
.ruler-num {
  font: 10px "Noto Sans", sans-serif;
  text-anchor: middle;
  fill: #6a6f7a;
}
.page {
  flex: 1;
  width: 797px;
  align-self: center;
  display: grid;
  grid-template-columns: 14px 642px 14px;
  grid-template-rows: 13px 18px;
  justify-content: center;
  padding-top: 64px;
  border: 1px solid #c0c2c4;
  border-bottom: 0;
  background: #fff;
  box-shadow: 0 0 6px rgba(0, 0, 0, .25);
}
.corner { border-bottom: 1px solid #c8c8c8; }
.corner.left { border-right: 1px solid #c8c8c8; }
.corner.right { grid-column: 3; border-left: 1px solid #c8c8c8; }
.caret { grid-column: 2; width: 1px; background: #000; }

.scrollbar { width: 12px; padding: 5px 3px; background: #fcfcfc; }
.scrollbar span {
  display: block;
  height: 71%;
  border-radius: 3px;
  background: #b8babf;
}
.splitter {
  display: flex;
  align-items: center;
  width: 7px;
  border: 1px solid #b4b6ba;
  border-bottom-width: 0;
}
.splitter button { width: 7px; height: 73px; margin: 0 -1px; flex: none; background: #5c616c; }
.sidebar {
  display: flex;
  flex-direction: column;
  align-items: center;
  gap: 3px;
  width: 40px;
  margin-bottom: 2px;
  padding-top: 4px;
  border: 1px solid #b4b6ba;
  border-width: 1px 0;
}
.deck { width: 32px; height: 32px; border-radius: 3px; }
.deck svg { width: 24px; height: 24px; }
.deck.menu { border-bottom: 1px solid #e2e3e5; border-radius: 0; height: 35px; }
.deck.menu svg { width: 10px; height: 10px; }
.deck.on { border: 1px solid #b4b6ba; }

/* Status bar */
.status {
  display: flex;
  align-items: center;
  height: 26px;
  padding-top: 1px;
  border-top: 1px solid #b4b6ba;
}
.status > span {
  display: flex;
  align-items: center;
  height: 20px;
  border-right: 1px solid #5c616c;
}
.status .s-page { width: 129px; padding-left: 11px; }
.status .s-words { width: 193px; padding-left: 9px; }
.status .s-style { width: 143px; padding-left: 9px; }
.status .s-lang { width: 147px; padding-left: 2px; justify-content: center; }
.status .s-blank { flex: 1; }
.status .s-icon { width: 30px; padding-left: 2px; justify-content: center; }
.status .s-sign { width: 82px; }
.status .s-view { width: 77px; padding-left: 2px; justify-content: center; gap: 6px; }
.status .s-zoom { width: 144px; padding-left: 2px; justify-content: center; gap: 6px; }
.status .s-pct { width: 49px; border: 0; justify-content: center; }
.s-zoom input {
  appearance: none;
  width: 98px;
  height: 12px;
  margin: 0;
  background:
    linear-gradient(#b4b6ba, #b4b6ba) 30px 50% / 2px 10px no-repeat,
    linear-gradient(#b4b6ba, #b4b6ba) 0 50% / 100% 2px no-repeat;
}
.s-zoom input::-webkit-slider-thumb {
  appearance: none;
  width: 9px;
  height: 9px;
  border: 1px solid #8c8e92;
  border-radius: 50%;
  background: #fff;
}

/* Scanner window */
.scan .titlebar h1 { color: #7f8691; }
.scan .menubar { color: #7f8691; }
.scanbar {
  display: flex;
  align-items: center;
  height: 40px;
  padding: 0 11px 1px;
  background: #2f343f;
  border-bottom: 1px solid #262a33;
  color: #868d99;
}
.scanbar button { height: 32px; gap: 7px; }
.scanbar .scan-opts { margin-left: 27px; }
.scanbar .do-save { margin-left: 21px; color: #4f5561; }
.scanbar .do-stop { margin-left: 26px; }
.ready {
  flex: 1;
  display: flex;
  flex-direction: column;
  align-items: center;
  justify-content: center;
  padding-top: 6px;
  color: #a0a5ad;
}
.ready h2 {
  margin: 18px 0 12px;
  font-size: 18px;
  line-height: 24px;
}

/* Panel */
.panel {
  display: flex;
  align-items: stretch;
  height: 27px;
  padding: 0 4px;
  background: rgba(36, 40, 51, .96);
  border-top: 1px solid #151c28;
  color: #fff;
  font-weight: 700;
}
.start { gap: 1px; }
.desk { margin-left: 11px; }
.launch { margin-left: 8px; }
.launch.ff { margin-left: 21px; }
.task {
  justify-content: flex-start;
  gap: 5px;
  width: 162px;
  padding: 3px 4px 0;
  color: #a0a2a8;
  border-bottom: 3px solid transparent;
}
.task.current { margin-left: 21px; color: #fff; border-color: #5294e2; }
.task + .task { margin-left: 8px; }
.tray {
  display: flex;
  align-items: center;
  gap: 10px;
  margin-left: auto;
}
.tray time { margin-right: -2px; }
.lang { color: #3d4a94; font-size: 11px; font-weight: 500; }
```
